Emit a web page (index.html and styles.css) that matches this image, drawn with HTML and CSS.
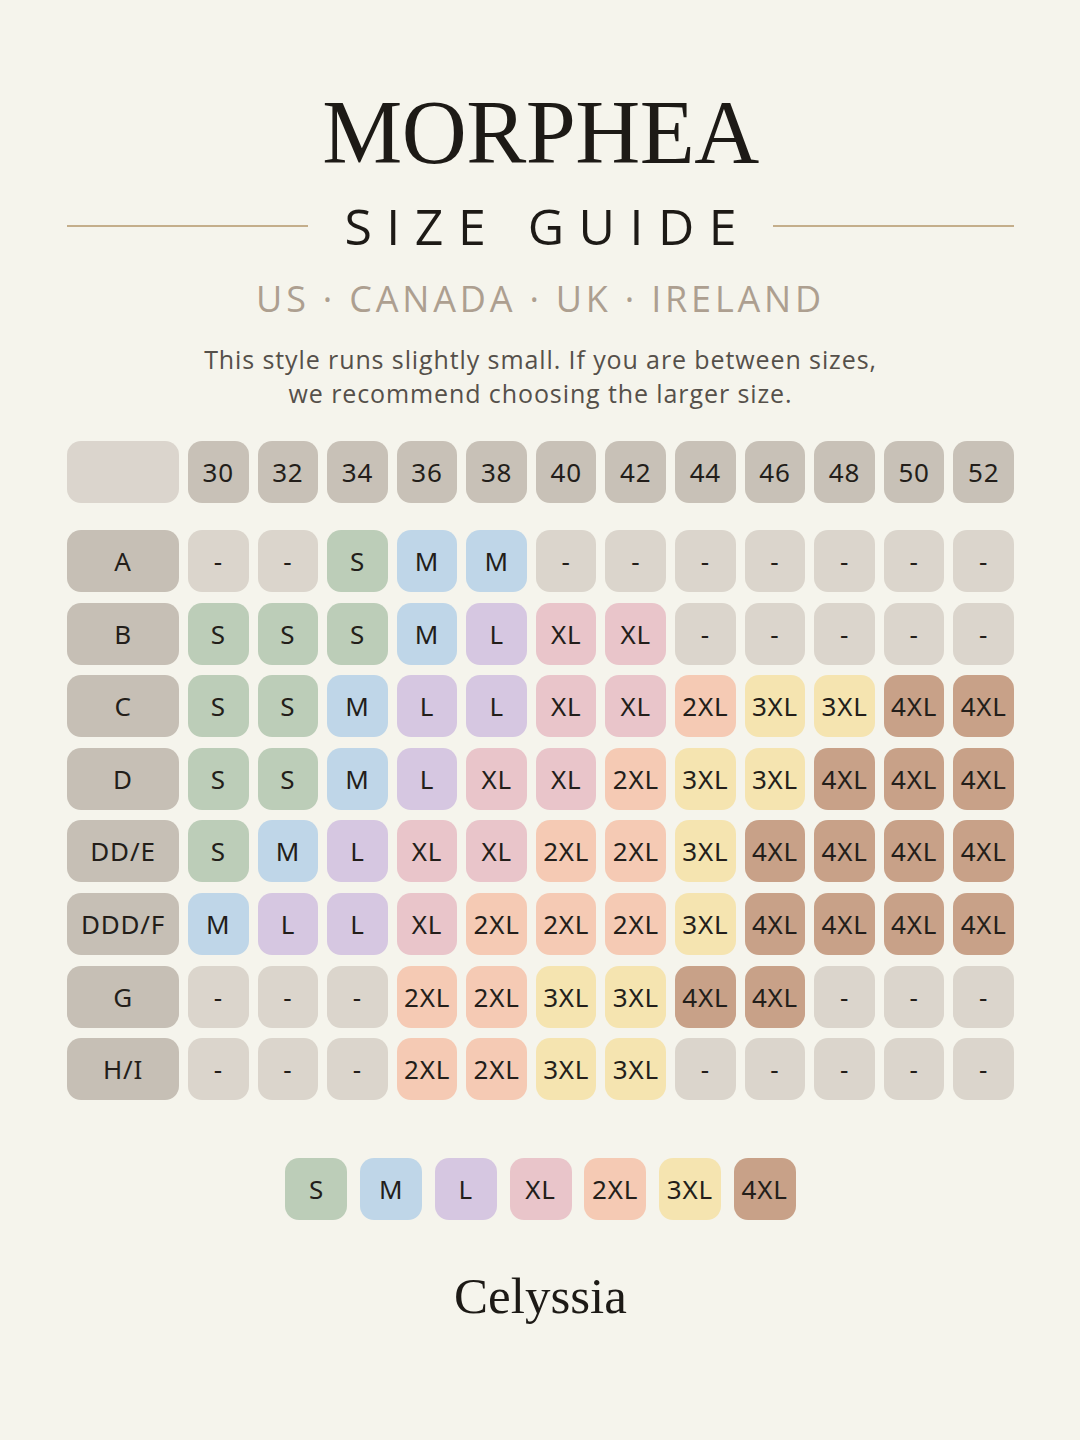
FILE: index.html
```html
<!DOCTYPE html>
<html lang="en">
<head>
<meta charset="utf-8">
<title>Morphea Size Guide</title>
<link rel="stylesheet" href="styles.css">
</head>
<body>
<main class="page">
  <h1 class="brand">MORPHEA</h1>
  <div class="guide-row">
    <span class="rule"></span>
    <h2 class="guide-title">SIZE GUIDE</h2>
    <span class="rule"></span>
  </div>
  <p class="regions">US · CANADA · UK · IRELAND</p>
  <p class="note">This style runs slightly small. If you are between sizes,<br>we recommend choosing the larger size.</p>

  <div class="chart-head">
    <div class="cell corner"></div>
    <div class="cell band">30</div><div class="cell band">32</div><div class="cell band">34</div><div class="cell band">36</div><div class="cell band">38</div><div class="cell band">40</div><div class="cell band">42</div><div class="cell band">44</div><div class="cell band">46</div><div class="cell band">48</div><div class="cell band">50</div><div class="cell band">52</div>
  </div>

  <div class="chart-body">
    <div class="cell cup">A</div>
    <div class="cell na">-</div><div class="cell na">-</div><div class="cell s">S</div><div class="cell m">M</div><div class="cell m">M</div><div class="cell na">-</div><div class="cell na">-</div><div class="cell na">-</div><div class="cell na">-</div><div class="cell na">-</div><div class="cell na">-</div><div class="cell na">-</div>

    <div class="cell cup">B</div>
    <div class="cell s">S</div><div class="cell s">S</div><div class="cell s">S</div><div class="cell m">M</div><div class="cell l">L</div><div class="cell xl">XL</div><div class="cell xl">XL</div><div class="cell na">-</div><div class="cell na">-</div><div class="cell na">-</div><div class="cell na">-</div><div class="cell na">-</div>

    <div class="cell cup">C</div>
    <div class="cell s">S</div><div class="cell s">S</div><div class="cell m">M</div><div class="cell l">L</div><div class="cell l">L</div><div class="cell xl">XL</div><div class="cell xl">XL</div><div class="cell x2">2XL</div><div class="cell x3">3XL</div><div class="cell x3">3XL</div><div class="cell x4">4XL</div><div class="cell x4">4XL</div>

    <div class="cell cup">D</div>
    <div class="cell s">S</div><div class="cell s">S</div><div class="cell m">M</div><div class="cell l">L</div><div class="cell xl">XL</div><div class="cell xl">XL</div><div class="cell x2">2XL</div><div class="cell x3">3XL</div><div class="cell x3">3XL</div><div class="cell x4">4XL</div><div class="cell x4">4XL</div><div class="cell x4">4XL</div>

    <div class="cell cup">DD/E</div>
    <div class="cell s">S</div><div class="cell m">M</div><div class="cell l">L</div><div class="cell xl">XL</div><div class="cell xl">XL</div><div class="cell x2">2XL</div><div class="cell x2">2XL</div><div class="cell x3">3XL</div><div class="cell x4">4XL</div><div class="cell x4">4XL</div><div class="cell x4">4XL</div><div class="cell x4">4XL</div>

    <div class="cell cup">DDD/F</div>
    <div class="cell m">M</div><div class="cell l">L</div><div class="cell l">L</div><div class="cell xl">XL</div><div class="cell x2">2XL</div><div class="cell x2">2XL</div><div class="cell x2">2XL</div><div class="cell x3">3XL</div><div class="cell x4">4XL</div><div class="cell x4">4XL</div><div class="cell x4">4XL</div><div class="cell x4">4XL</div>

    <div class="cell cup">G</div>
    <div class="cell na">-</div><div class="cell na">-</div><div class="cell na">-</div><div class="cell x2">2XL</div><div class="cell x2">2XL</div><div class="cell x3">3XL</div><div class="cell x3">3XL</div><div class="cell x4">4XL</div><div class="cell x4">4XL</div><div class="cell na">-</div><div class="cell na">-</div><div class="cell na">-</div>

    <div class="cell cup">H/I</div>
    <div class="cell na">-</div><div class="cell na">-</div><div class="cell na">-</div><div class="cell x2">2XL</div><div class="cell x2">2XL</div><div class="cell x3">3XL</div><div class="cell x3">3XL</div><div class="cell na">-</div><div class="cell na">-</div><div class="cell na">-</div><div class="cell na">-</div><div class="cell na">-</div>
  </div>

  <div class="legend">
    <div class="cell key s">S</div>
    <div class="cell key m">M</div>
    <div class="cell key l">L</div>
    <div class="cell key xl">XL</div>
    <div class="cell key x2">2XL</div>
    <div class="cell key x3">3XL</div>
    <div class="cell key x4">4XL</div>
  </div>

  <div class="logo">Celyssia</div>
</main>
</body>
</html>
```

FILE: styles.css
```css
* { box-sizing: border-box; }

html, body {
  margin: 0;
  padding: 0;
  background: #f5f4ec;
}

body {
  width: 1080px;
  height: 1440px;
  overflow: hidden;
  font-family: "Noto Sans", "Open Sans", sans-serif;
  color: #2a2420;
}

.page {
  padding: 88px 66px 0 67px;
  display: flex;
  flex-direction: column;
}

.brand {
  margin: 0;
  text-align: center;
  font-family: "Liberation Serif", "DejaVu Serif", serif;
  font-weight: 400;
  font-size: 90px;
  line-height: 90px;
  letter-spacing: -0.5px;
  color: #1d1a16;
}

.guide-row {
  margin-top: 18px;
  display: flex;
  align-items: center;
  gap: 36px;
}

.rule {
  flex: 1;
  height: 2px;
  background: #c4ae8b;
}

.guide-title {
  margin: 0;
  font-family: "Open Sans", "Noto Sans", sans-serif;
  font-weight: 400;
  font-size: 50px;
  line-height: 60px;
  letter-spacing: 14.5px;
  margin-right: -14.5px;
  color: #1d1a16;
}

.regions {
  margin: 20px 0 0;
  text-align: center;
  font-family: "Open Sans", "Noto Sans", sans-serif;
  font-weight: 400;
  font-size: 36px;
  line-height: 46px;
  letter-spacing: 3.8px;
  color: #ad9f90;
}

.note {
  margin: 20px 0 0;
  text-align: center;
  font-family: "Open Sans", "Noto Sans", sans-serif;
  font-size: 25px;
  line-height: 34px;
  letter-spacing: 0.9px;
  color: #55504a;
}

.chart-head,
.chart-body {
  display: grid;
  grid-template-columns: 112px repeat(12, 1fr);
  column-gap: 9px;
}

.chart-head {
  margin-top: 31px;
  grid-auto-rows: 62px;
}

.chart-body {
  margin-top: 27px;
  grid-auto-rows: 62px;
  row-gap: 10.6px;
}

.cell {
  display: flex;
  align-items: center;
  justify-content: center;
  border-radius: 14px;
  font-size: 26px;
  font-weight: 400;
  color: #231e1a;
  white-space: nowrap;
  letter-spacing: 0.8px;
}

.corner { background: #dbd5cd; }
.band { background: #c8c1b7; }
.cup { background: #c6bfb5; }
.na { background: #dbd5cc; }
.s { background: #bccdb8; }
.m { background: #bfd6e8; }
.l { background: #d6c7e1; }
.xl { background: #e9c5ca; }
.x2 { background: #f5cab4; }
.x3 { background: #f5e4b0; }
.x4 { background: #c8a188; }

.legend {
  margin-top: 58px;
  display: flex;
  justify-content: center;
  gap: 12.7px;
}

.key {
  width: 62px;
  height: 62px;
}

.logo {
  margin-top: 46px;
  text-align: center;
  font-family: "Liberation Serif", "DejaVu Serif", serif;
  font-size: 51px;
  line-height: 60px;
  color: #1d1a16;
}
```
